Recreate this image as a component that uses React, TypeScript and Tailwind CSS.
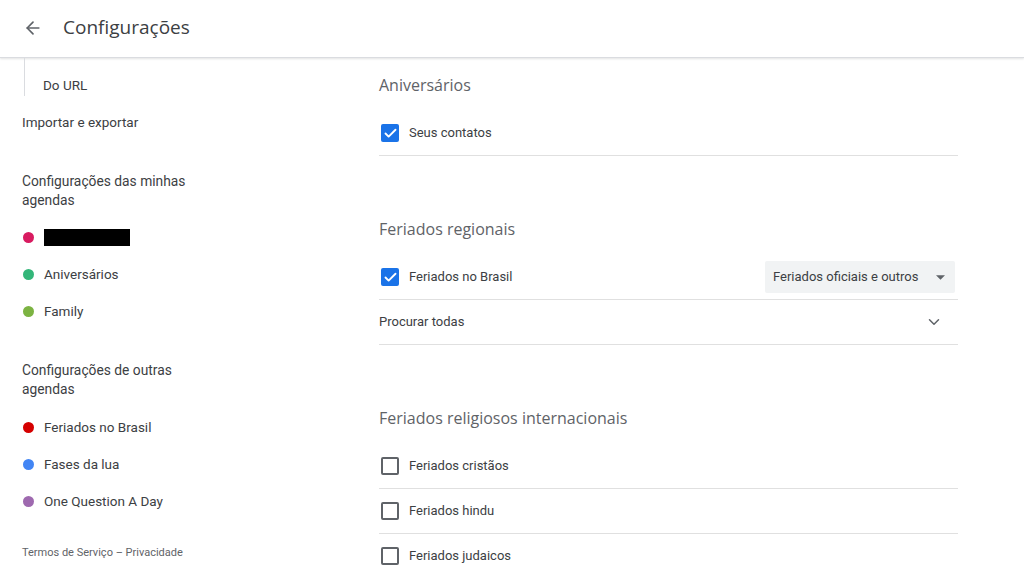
import { ArrowLeft, ChevronDown, Check } from "lucide-react";

const myCalendars = [
  { color: "bg-[#d81b60]", label: "", redacted: true },
  { color: "bg-[#33b679]", label: "Aniversários" },
  { color: "bg-[#7cb342]", label: "Family" },
];

const otherCalendars = [
  { color: "bg-[#d50000]", label: "Feriados no Brasil" },
  { color: "bg-[#4285f4]", label: "Fases da lua" },
  { color: "bg-[#9e69af]", label: "One Question A Day" },
];

function CalendarItem({ color, label, redacted }: { color: string; label: string; redacted?: boolean }) {
  return (
    <div className="h-[37px] flex items-center">
      <span className={`w-[11px] h-[11px] rounded-full ${color} ml-[1px]`} />
      {redacted ? (
        <span className="ml-[10px] w-[86px] h-[17px] bg-black" />
      ) : (
        <span className="ml-[10px] text-[13.5px] text-[#3c4043]">{label}</span>
      )}
    </div>
  );
}

function Checkbox({ checked }: { checked?: boolean }) {
  return checked ? (
    <span className="w-[18px] h-[18px] rounded-[2px] bg-[#1a73e8] flex items-center justify-center">
      <Check size={15} strokeWidth={3} className="text-white" />
    </span>
  ) : (
    <span className="w-[18px] h-[18px] rounded-[2px] border-2 border-[#5f6368]" />
  );
}

function CheckRow({ label, checked, children }: { label: string; checked?: boolean; children?: React.ReactNode }) {
  return (
    <div className="h-[45px] border-b border-[#e0e0e0] flex items-center pl-[2px]">
      <Checkbox checked={checked} />
      <span className="ml-[10px] text-[13px] text-[#3c4043]">{label}</span>
      <div className="flex-1" />
      {children}
    </div>
  );
}

function SectionTitle({ children }: { children: React.ReactNode }) {
  return (
    <h2 className="h-6 leading-6 text-[16px] text-[#5f6368]" style={{ fontFamily: "'Open Sans', sans-serif" }}>
      {children}
    </h2>
  );
}

export default function App() {
  return (
    <div className="w-[1024px] h-[566px] overflow-hidden bg-white" style={{ fontFamily: "Roboto, 'Liberation Sans', sans-serif" }}>
      {/* HEADER */}
      <header className="h-[58px] border-b border-[#dadce0] shadow-[0_1px_2px_rgba(60,64,67,0.15)] flex items-center pb-[2px]">
        <ArrowLeft size={20} strokeWidth={2} className="ml-[23px] text-[#5f6368]" />
        <span className="ml-[20px] text-[19px] text-[#3c4043]" style={{ fontFamily: "'Open Sans', sans-serif" }}>
          Configurações
        </span>
      </header>

      <div className="flex">
        {/* SIDEBAR */}
        <aside className="w-[379px] shrink-0 pl-[22px]">
          <div className="ml-[2px] h-[38px] border-l border-[#dadce0] pl-[18px] pt-[17px]">
            <div className="leading-5 text-[13.5px] text-[#3c4043]">Do URL</div>
          </div>
          <div className="h-[50px] pt-4 leading-5 text-[13.5px] text-[#3c4043]">Importar e exportar</div>

          <h3 className="mt-[26px] w-[185px] leading-[19px] text-[13.8px] text-[#3c4043]">
            Configurações das minhas agendas
          </h3>
          <div className="mt-[9px]">
            {myCalendars.map((c, i) => (
              <CalendarItem key={i} {...c} />
            ))}
          </div>

          <h3 className="mt-[31px] w-[185px] leading-[19px] text-[13.8px] text-[#3c4043]">
            Configurações de outras agendas
          </h3>
          <div className="mt-[10px]">
            {otherCalendars.map((c, i) => (
              <CalendarItem key={i} {...c} />
            ))}
          </div>

          <div className="mt-[25px] leading-4 text-[11px] text-[#5f6368]">Termos de Serviço – Privacidade</div>
        </aside>

        {/* MAIN */}
        <main className="w-[579px]">
          <section className="pt-[15px]">
            <SectionTitle>Aniversários</SectionTitle>
            <div className="mt-[14px]">
              <CheckRow label="Seus contatos" checked />
            </div>
          </section>

          <section className="pt-[61px]">
            <SectionTitle>Feriados regionais</SectionTitle>
            <div className="mt-[14px]">
              <CheckRow label="Feriados no Brasil" checked>
                <div className="w-[190px] h-[32px] mr-[3px] rounded-[2px] bg-[#f1f3f4] flex items-center pl-2 pr-[10px]">
                  <span className="flex-1 text-[13px] text-[#3c4043]">Feriados oficiais e outros</span>
                  <svg width="9" height="5" viewBox="0 0 10 5">
                    <path d="M0 0 L10 0 L5 5 Z" fill="#5f6368" />
                  </svg>
                </div>
              </CheckRow>
              <div className="h-[45px] border-b border-[#e0e0e0] flex items-center">
                <span className="flex-1 text-[13px] text-[#3c4043]">Procurar todas</span>
                <ChevronDown size={18} strokeWidth={2} className="mr-[15px] text-[#5f6368]" />
              </div>
            </div>
          </section>

          <section className="pt-[61px]">
            <SectionTitle>Feriados religiosos internacionais</SectionTitle>
            <div className="mt-[14px]">
              <CheckRow label="Feriados cristãos" />
              <CheckRow label="Feriados hindu" />
              <CheckRow label="Feriados judaicos" />
            </div>
          </section>
        </main>
      </div>
    </div>
  );
}
